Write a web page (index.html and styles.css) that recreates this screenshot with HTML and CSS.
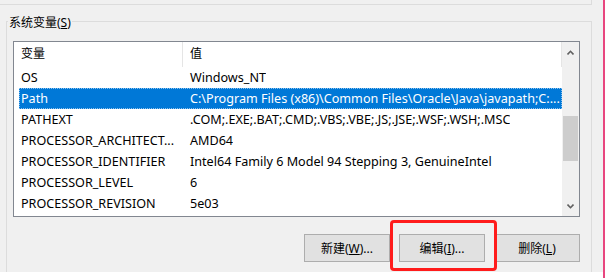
FILE: index.html
```html
<!DOCTYPE html>
<html lang="zh-CN">
<head>
    <meta charset="UTF-8">
    <title>环境变量</title>
    <link rel="stylesheet" href="styles.css">
</head>
<body>
    <div class="screen">
        <div class="dialog">
            <div class="top-box"></div>

            <div class="group">
                <span class="group-title">系统变量(<u>S</u>)</span>

                <div class="listbox">
                    <div class="list">
                        <div class="head">
                            <span class="c1">变量</span>
                            <span class="c2">值</span>
                        </div>
                        <div class="row"><span class="c1">OS</span><span class="c2">Windows_NT</span></div>
                        <div class="row selected"><span class="c1">Path</span><span class="c2">C:\Program Files (x86)\Common Files\Oracle\Java\javapath;C:...</span></div>
                        <div class="row"><span class="c1">PATHEXT</span><span class="c2">.COM;.EXE;.BAT;.CMD;.VBS;.VBE;.JS;.JSE;.WSF;.WSH;.MSC</span></div>
                        <div class="row"><span class="c1">PROCESSOR_ARCHITECT...</span><span class="c2">AMD64</span></div>
                        <div class="row"><span class="c1">PROCESSOR_IDENTIFIER</span><span class="c2">Intel64 Family 6 Model 94 Stepping 3, GenuineIntel</span></div>
                        <div class="row"><span class="c1">PROCESSOR_LEVEL</span><span class="c2">6</span></div>
                        <div class="row"><span class="c1">PROCESSOR_REVISION</span><span class="c2">5e03</span></div>
                    </div>

                    <div class="scrollbar">
                        <div class="arrow up">
                            <svg width="7" height="5" viewBox="0 0 7 5"><polyline points="0.5,4.5 3.5,1.3 6.5,4.5" fill="none" stroke="#606060" stroke-width="1.6"/></svg>
                        </div>
                        <div class="track"><div class="thumb"></div></div>
                        <div class="arrow down">
                            <svg width="7" height="5" viewBox="0 0 7 5"><polyline points="0.5,0.5 3.5,3.7 6.5,0.5" fill="none" stroke="#606060" stroke-width="1.6"/></svg>
                        </div>
                    </div>
                </div>

                <div class="buttons">
                    <button class="btn">新建(<u>W</u>)...</button>
                    <div class="marked">
                        <button class="btn">编辑(<u>I</u>)...</button>
                        <span class="mark"></span>
                    </div>
                    <button class="btn">删除(<u>L</u>)</button>
                </div>
            </div>
        </div>
    </div>
</body>
</html>
```

FILE: styles.css
```css
body {
    margin: 0;
    background-color: #fff;
    font-family: "Noto Sans", "Noto Sans CJK SC", sans-serif;
    font-size: 12px;
    color: #000;
}

.screen {
    width: 603px;
    height: 278px;
    border-right: 2px solid #e8467f;
}

.dialog {
    height: 272px;
    background-color: #f0f0f0;
    overflow: hidden;
}

.top-box {
    width: 591px;
    height: 4px;
    border-right: 1px solid #dcdcdc;
    border-bottom: 1px solid #dcdcdc;
}

.group {
    margin: 16px 0 0 6px;
    width: 584px;
    height: 260px;
    border: 1px solid #dcdcdc;
    border-bottom: none;
}

.group-title {
    display: block;
    width: max-content;
    margin: -7px 0 0 1px;
    padding: 0 1px;
    line-height: 16px;
    background-color: #f0f0f0;
}

.listbox {
    display: flex;
    margin: 10px 0 0 6px;
    width: 565px;
    height: 174px;
    border: 1px solid #828790;
    background-color: #fff;
}

.list {
    width: 548px;
    overflow: hidden;
}

.head {
    display: flex;
    height: 25px;
    line-height: 24px;
    border-right: 1px solid #e5e5e5;
}

.head .c1 {
    width: 161px;
    padding-left: 7px;
    border-right: 1px solid #e5e5e5;
}

.head .c2 {
    padding-left: 7px;
}

.row {
    display: flex;
    height: 21px;
    line-height: 21px;
    margin-left: 5px;
    font-size: 12.6px;
    white-space: nowrap;
}

.row .c1 {
    width: 162px;
    padding-left: 2px;
    overflow: hidden;
}

.row .c2 {
    padding-left: 7px;
    overflow: hidden;
}

.row.selected {
    background-color: #0078d7;
    color: #fff;
    outline: 1px dotted #8cc2ee;
    outline-offset: -1px;
}

.scrollbar {
    display: flex;
    flex-direction: column;
    width: 17px;
    background-color: #f0f0f0;
}

.arrow {
    display: flex;
    align-items: center;
    justify-content: center;
}

.arrow.up {
    height: 20px;
}

.arrow.down {
    height: 19px;
}

.arrow svg {
    display: block;
}

.track {
    flex: 1;
}

.thumb {
    margin: 54px 1px 0 1px;
    height: 45px;
    background-color: #cdcdcd;
}

.buttons {
    display: flex;
    justify-content: flex-end;
    gap: 9px;
    margin: 17px 0 0 6px;
    width: 567px;
}

.btn {
    width: 86px;
    height: 28px;
    padding: 0;
    border: 1px solid #adadad;
    background-color: #e1e1e1;
    font-family: "Noto Sans", "Noto Sans CJK SC", sans-serif;
    font-size: 12px;
    color: #000;
}

.marked {
    position: relative;
    display: flex;
}

.mark {
    position: absolute;
    left: -9px;
    top: -14px;
    right: -12px;
    bottom: -9px;
    border: 3px solid #ff1c1c;
    border-radius: 4px;
}
```
